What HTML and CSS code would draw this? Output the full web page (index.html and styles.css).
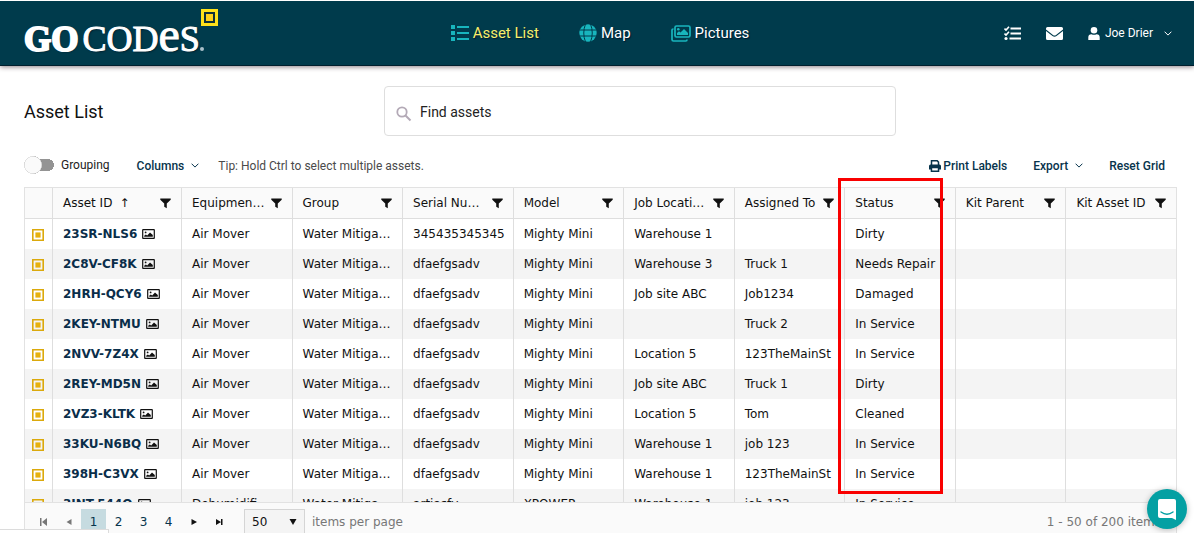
FILE: index.html
```html
<!DOCTYPE html>
<html lang="en">
<head>
<meta charset="utf-8">
<title>GoCodes - Asset List</title>
<link rel="stylesheet" href="styles.css">
</head>
<body>
<svg class="sprite" aria-hidden="true">
  <symbol id="i-funnel" viewBox="0 0 12 12"><path d="M0.3 1h11.4v1.4L7.4 6.6V11.8L4.6 10V6.6L0.3 2.4z"/></symbol>
  <symbol id="i-tag" viewBox="0 0 12 12"><path fill="none" stroke="#dba90c" stroke-width="1.6" d="M.8.8h10.4v10.4H.8z"/><path fill="#e6b10e" d="M3.4 3.4h5.2v5.2H3.4z"/></symbol>
  <symbol id="i-pic" viewBox="0 0 13 10"><rect x=".7" y=".7" width="11.6" height="8.6" rx=".4" fill="none" stroke="currentColor" stroke-width="1.2"/><circle cx="3.6" cy="3.4" r=".9"/><path d="M2.200 7.800V6.800l1.600-1.400L5.200 6.400 8 3.500 10.800 6v1.800z"/></symbol>
  <symbol id="i-chev" viewBox="0 0 8 5"><path fill="none" stroke="currentColor" stroke-width="1" d="M.6.7 4 4.100 7.400.7"/></symbol>
</svg>

<header class="topbar">
  <a class="logo" href="#" aria-label="GoCodes"><span class="logo-go">GO</span><span class="logo-codes">COD<span class="logo-e">e</span>S</span><span class="logo-dot"></span>
    <svg class="logo-mark" viewBox="0 0 17 17" aria-hidden="true"><path fill="#ffe11b" d="M0 0h17v17H0z"/><path fill="#10303a" d="M3 3h11v11H3z"/><path fill="#ffd21b" d="M5 5h7v7H5z"/></svg>
  </a>
  <nav class="nav">
    <a class="nav-link active" href="#"><svg width="18" height="16" viewBox="0 0 18 16" aria-hidden="true"><path d="M0 0h4v4H0zM0 6h4v4H0zM0 12h4v4H0zM6 1h12v2H6zM6 7h12v2H6zM6 13h12v2H6z"/></svg>Asset List</a>
    <a class="nav-link" href="#"><svg width="18" height="18" viewBox="0 0 18 18" aria-hidden="true"><circle cx="9" cy="9" r="8.700"/><path fill="none" stroke="#003b4c" stroke-width="1" d="M0 6h18M0 12h18M6.500 0Q3 9 6.500 18M11.500 0q3.500 9 0 18"/></svg>Map</a>
    <a class="nav-link" href="#"><svg width="20" height="17" viewBox="0 0 20 17" aria-hidden="true"><rect x="4" y="1" width="15" height="11" rx="1.500" fill="none" stroke="currentColor" stroke-width="1.700"/><path fill="none" stroke="currentColor" stroke-width="1.700" d="M2.500 4H2.200Q1 4 1 5.200v9.300Q1 16 2.500 16h12.300Q16 16 16 14.500"/><circle cx="7.300" cy="4.300" r="1.300"/><path d="M6 10V8l2-1.700 1.500 1.200L13 4l4 4V10z"/></svg>Pictures</a>
  </nav>
  <div class="tools">
    <button class="icon-btn" aria-label="Tasks"><svg width="17" height="15" viewBox="0 0 17 15" aria-hidden="true"><path d="M6.500 1.500H17v2H6.500zM6.500 6.500H17v2H6.500zM5.500 11.500H17v2H5.500z"/><circle cx="2" cy="12.500" r="1.600"/><path fill="none" stroke="currentColor" stroke-width="1.600" d="M.5 2.500 2 4 5 .7M.5 7.500 2 9l3-3.300"/></svg></button>
    <button class="icon-btn" aria-label="Messages"><svg width="17" height="13" viewBox="0 0 17 13" aria-hidden="true"><path d="M1.500 0h14Q17 0 17 1.500v1L10 8Q8.500 9 7 8L0 2.500v-1Q0 0 1.500 0zM0 4l6.500 5q2 1.300 4 0L17 4v7.500q0 1.500-1.500 1.500h-14Q0 13 0 11.500z"/></svg></button>
    <button class="user"><svg width="12" height="13" viewBox="0 0 12 13" aria-hidden="true"><circle cx="6" cy="3.300" r="3.300"/><path d="M.3 13V10.500Q.3 7.200 3.500 7.200Q6 8.300 8.500 7.200q3.200 0 3.200 3.300V13z"/></svg><span>Joe Drier</span><svg class="chev" aria-hidden="true"><use href="#i-chev"/></svg></button>
  </div>
</header>

<main class="page">
  <div class="title-row">
    <h1>Asset List</h1>
    <label class="search"><svg width="16" height="16" viewBox="0 0 16 16" aria-hidden="true"><circle cx="6" cy="6" r="4.700" fill="none" stroke="currentColor" stroke-width="1.800"/><path stroke="currentColor" stroke-width="2" d="m9.500 9.500 5 5"/></svg><input type="text" placeholder="Find assets" aria-label="Find assets"></label>
  </div>

  <div class="toolbar">
    <label class="grouping"><input type="checkbox" role="switch">Grouping</label>
    <button class="link columns">Columns<svg class="chev" aria-hidden="true"><use href="#i-chev"/></svg></button>
    <span class="tip">Tip: Hold Ctrl to select multiple assets.</span>
    <div class="actions">
      <button class="link print"><svg width="12" height="12" viewBox="0 0 12 12" aria-hidden="true"><path fill="none" stroke="currentColor" stroke-width="1.500" d="M2.500 5V.8h5.700l1.300 1.300V5"/><path fill-rule="evenodd" d="M1.500 4.500h9Q12 4.500 12 6v3.500h-1.700V12H1.700V9.500H0V6q0-1.500 1.500-1.500zM3.200 8.300v2.200h5.600V8.300z"/></svg>Print Labels</button>
      <button class="link export">Export<svg class="chev" aria-hidden="true"><use href="#i-chev"/></svg></button>
      <button class="link">Reset Grid</button>
    </div>
  </div>

  <section class="grid">
    <div class="grid-body">
      <table id="assets">
        <colgroup><col class="c-tag"><col class="c-id"><col span="9"></colgroup>
        <thead><tr id="head"></tr></thead>
        <tbody id="rows"></tbody>
      </table>
    </div>
    <footer class="pager">
      <button class="pg dim" aria-label="First page"><svg width="8" height="8" viewBox="0 0 8 8"><path d="M0 0h1.500v8H0zM7 0v8L2 4z"/></svg></button>
      <button class="pg dim" aria-label="Previous page"><svg width="8" height="8" viewBox="0 0 8 8"><path d="M6.500 1v6L1.500 4z"/></svg></button>
      <button class="pg current">1</button>
      <button class="pg">2</button>
      <button class="pg">3</button>
      <button class="pg">4</button>
      <button class="pg" aria-label="Next page"><svg width="8" height="8" viewBox="0 0 8 8"><path d="M1.500 1v6L7 4z"/></svg></button>
      <button class="pg" aria-label="Last page"><svg width="8" height="8" viewBox="0 0 8 8"><path d="M1 1v6l5-3zM6 1h1.500v6H6z"/></svg></button>
      <span class="size"><select id="page-size"><option>50</option><option>100</option></select><svg width="8" height="6" viewBox="0 0 8 6" aria-hidden="true"><path d="M.5 0h7L4 6z"/></svg></span>
      <label for="page-size">items per page</label>
      <span class="total">1 - 50 of 200 items</span>
    </footer>
  </section>
</main>

<div class="highlight"></div>
<div class="status-tip"></div>
<button class="chat" aria-label="Open chat"><svg width="18" height="21" viewBox="0 0 18 21" aria-hidden="true"><path fill="#fff" d="M2 0h14Q18 0 18 2V21l-4-2H2Q0 19 0 17v-15Q0 0 2 0z"/><path fill="none" stroke="#04a0a3" stroke-width="1.400" stroke-linecap="round" d="M3 13q6 4.600 12 0"/></svg></button>
<script src="grid.js"></script>
</body>
</html>
```
FILE: styles.css
```css
* { box-sizing: border-box; }
body {
  margin: 0;
  height: 100vh;
  overflow: hidden;
  display: flex;
  flex-direction: column;
  background: #fff;
  color: #111;
  font: 13px/16px Roboto, "Liberation Sans", sans-serif;
}
button, input, select { font: inherit; color: inherit; }
button { background: none; border: 0; padding: 0; display: flex; align-items: center; }
svg { fill: currentColor; flex: none; display: block; }
.sprite { position: absolute; width: 0; height: 0; }
a { color: inherit; text-decoration: none; }
.chev { width: 8px; height: 5px; }

.topbar {
  flex: none;
  height: 66px;
  border-top: 1px solid #fff;
  border-bottom: 1px solid #00202e;
  background: #003b4c;
  color: #fff;
  display: grid;
  grid-template-columns: 1fr auto 1fr;
  align-items: center;
  padding: 0 22px 0 24px;
  box-shadow: 0 1px 5px #8d8086;
}
.logo {
  position: relative;
  justify-self: start;
  display: flex;
  align-items: baseline;
  margin-top: 8px;
  font: 36px/40px "Liberation Serif", serif;
  text-shadow: 1px 1px 2px #001a28;
  -webkit-text-stroke: 1px #fff;
}
.logo-go { font-size: 35px; font-weight: 700; margin-right: 4px; -webkit-text-stroke: 2px #fff; }
.logo-e { font-size: 48px; line-height: 40px; }
.logo-dot { width: 4px; height: 4px; border-radius: 50%; background: #a9c0ca; }
.logo-mark { position: absolute; right: -14px; top: -6px; width: 17px; height: 17px; }
.nav { display: flex; align-items: center; gap: 40px; padding-left: 4px; }
.nav-link { display: flex; align-items: center; gap: 4px; font-size: 15px; line-height: 20px; text-shadow: 1px 1px 1px #001a30; }
.nav-link svg { color: #18b5bd; }
.nav-link.active { color: #f7ee6b; }
.tools { justify-self: end; display: flex; align-items: center; gap: 25px; }
.user { gap: 5px; font-size: 12px; }
.user .chev { margin-left: 6px; }

.page { flex: 1; min-height: 0; display: flex; flex-direction: column; padding: 20px 17px 0 24px; }
.title-row { display: grid; grid-template-columns: 360px minmax(200px, 512px) 1fr; align-items: center; }
h1 { margin: 0; padding-top: 2px; font-size: 18px; line-height: 24px; font-weight: 400; -webkit-text-stroke: 0 #111; }
.search { display: flex; align-items: center; gap: 8px; height: 50px; padding: 0 11px; border: 1px solid #dedede; border-radius: 4px; }
.search svg { color: #b3a9b6; margin-top: 6px; }
.search input { flex: 1; min-width: 0; border: 0; outline: 0; padding: 2px 0 0; font-size: 14px; background: none; }
.search input::placeholder { color: #222; opacity: 1; }

.toolbar { display: flex; align-items: center; height: 51px; padding-top: 8px; font-size: 12px; }
.grouping { display: flex; align-items: center; gap: 6px; color: #222; padding-bottom: 2px; }
.grouping input {
  appearance: none;
  margin: 0;
  width: 31px;
  height: 18px;
  border-radius: 9px;
  background:
    radial-gradient(circle at 9px 9px, #fafafa 8px, #bbb 9px, transparent 9px),
    linear-gradient(#949494, #949494) 16px 3px / 8px 12px no-repeat,
    radial-gradient(circle at 24px 9px, #949494 6px, transparent 6px);
}
.link { color: #07344c; font-weight: 500; }
.columns { gap: 7px; margin-left: 27px; }
.tip { margin-left: 19px; color: #4a4a4a; }
.actions { margin-left: auto; display: flex; gap: 26px; padding-right: 12px; }
.print { gap: 2px; }
.export { gap: 7px; }

.grid { flex: 1; min-height: 0; display: flex; flex-direction: column; font: 12px/16px "DejaVu Sans", sans-serif; border: 1px solid #e2e2e2; border-width: 1px 1px 0; }
.grid-body { flex: 1; min-height: 0; overflow: hidden; }
table { width: 100%; table-layout: fixed; border-collapse: separate; border-spacing: 0; }
.c-tag { width: 27px; }
.c-id { width: 129px; }
th, td { padding: 0 0 0 10px; border-left: 1px solid #dedede; white-space: nowrap; text-align: left; font-weight: 400; height: 30px; }
th:first-child, td:first-child { border-left: 0; padding-left: 7px; }
th { background: #fafafa; border-bottom: 1px solid #dedede; height: 31px; padding-right: 10px; }
tbody tr:nth-child(even) { background: #f4f4f4; }
.tag { width: 12px; height: 12px; margin-top: 2px; }
.head { display: flex; align-items: center; gap: 7px; }
.head button { margin-left: auto; }
.head .label + button { margin-left: auto; }
.head svg { width: 11px; height: 12px; }
.head:not(.sorted) { gap: 0; }
.asset { display: flex; align-items: center; gap: 5px; color: #0a2e4a; font-weight: 700; }
.asset svg { width: 13px; height: 10px; color: #111; }

.pager { flex: none; height: 31px; padding: 7px 15px 0 6px; border-top: 1px solid #e2e2e2; background: #fafafa; display: flex; align-items: center; color: #777; line-height: 18px; }
.pg { width: 25px; height: 25px; justify-content: center; color: #07344c; flex: none; }
.pg svg { color: #111; }
.pg.dim svg { color: #777; }
.pg.current { background: #c6dbe0; }
.size { position: relative; width: 61px; height: 25px; margin: 0 7px 0 13px; }
.size select { appearance: none; width: 100%; height: 26px; padding: 0 7px; border: 1px solid #d5d5d5; border-radius: 0; background: #f4f4f4; color: #111; }
.size svg { position: absolute; right: 8px; top: 10px; color: #111; }
.total { margin-left: auto; }

.highlight { position: absolute; left: 838px; top: 178px; width: 105px; height: 316px; border: 3px solid #f90000; pointer-events: none; }
.status-tip { position: absolute; left: 0; bottom: 0; width: 109px; height: 4px; background: #fff; border: 1px solid #dcdcdc; border-width: 1px 1px 0 0; }
.chat { position: absolute; right: 7px; bottom: 4px; width: 40px; height: 40px; border-radius: 50%; background: #04a0a3; justify-content: center; box-shadow: 0 1px 6px #0004; }
```
FILE: grid.js
```js
const columns = ["Asset ID", "Equipmen…", "Group", "Serial Nu…", "Model", "Job Locati…", "Assigned To", "Status", "Kit Parent", "Kit Asset ID"];
const mover = ["Air Mover", "Water Mitiga…"];
const rows = [
  ["23SR-NLS6", ...mover, "345435345345", "Mighty Mini", "Warehouse 1", "", "Dirty"],
  ["2C8V-CF8K", ...mover, "dfaefgsadv", "Mighty Mini", "Warehouse 3", "Truck 1", "Needs Repair"],
  ["2HRH-QCY6", ...mover, "dfaefgsadv", "Mighty Mini", "Job site ABC", "Job1234", "Damaged"],
  ["2KEY-NTMU", ...mover, "dfaefgsadv", "Mighty Mini", "", "Truck 2", "In Service"],
  ["2NVV-7Z4X", ...mover, "dfaefgsadv", "Mighty Mini", "Location 5", "123TheMainSt", "In Service"],
  ["2REY-MD5N", ...mover, "dfaefgsadv", "Mighty Mini", "Job site ABC", "Truck 1", "Dirty"],
  ["2VZ3-KLTK", ...mover, "dfaefgsadv", "Mighty Mini", "Location 5", "Tom", "Cleaned"],
  ["33KU-N6BQ", ...mover, "dfaefgsadv", "Mighty Mini", "Warehouse 1", "job 123", "In Service"],
  ["398H-C3VX", ...mover, "dfaefgsadv", "Mighty Mini", "Warehouse 1", "123TheMainSt", "In Service"],
  ["3JNT-544Q", "Dehumidifi…", "Water Mitiga…", "artiasfv", "XPOWER", "Warehouse 1", "job 123", "In Service"]
];

document.getElementById("head").innerHTML = "<th></th>" + columns.map((name, i) =>
  `<th><div class="head${i === 0 ? " sorted" : ""}"><span class="label">${name}</span>${i === 0 ? "<span>↑</span>" : ""}<button aria-label="Filter ${name}"><svg><use href="#i-funnel"/></svg></button></div></th>`
).join("");

document.getElementById("rows").innerHTML = rows.map(row =>
  `<tr><td><svg class="tag"><use href="#i-tag"/></svg></td>` + columns.map((_, i) =>
    i === 0 ? `<td><a class="asset" href="#">${row[0]}<svg><use href="#i-pic"/></svg></a></td>` : `<td>${row[i] || ""}</td>`
  ).join("") + "</tr>"
).join("");
```
